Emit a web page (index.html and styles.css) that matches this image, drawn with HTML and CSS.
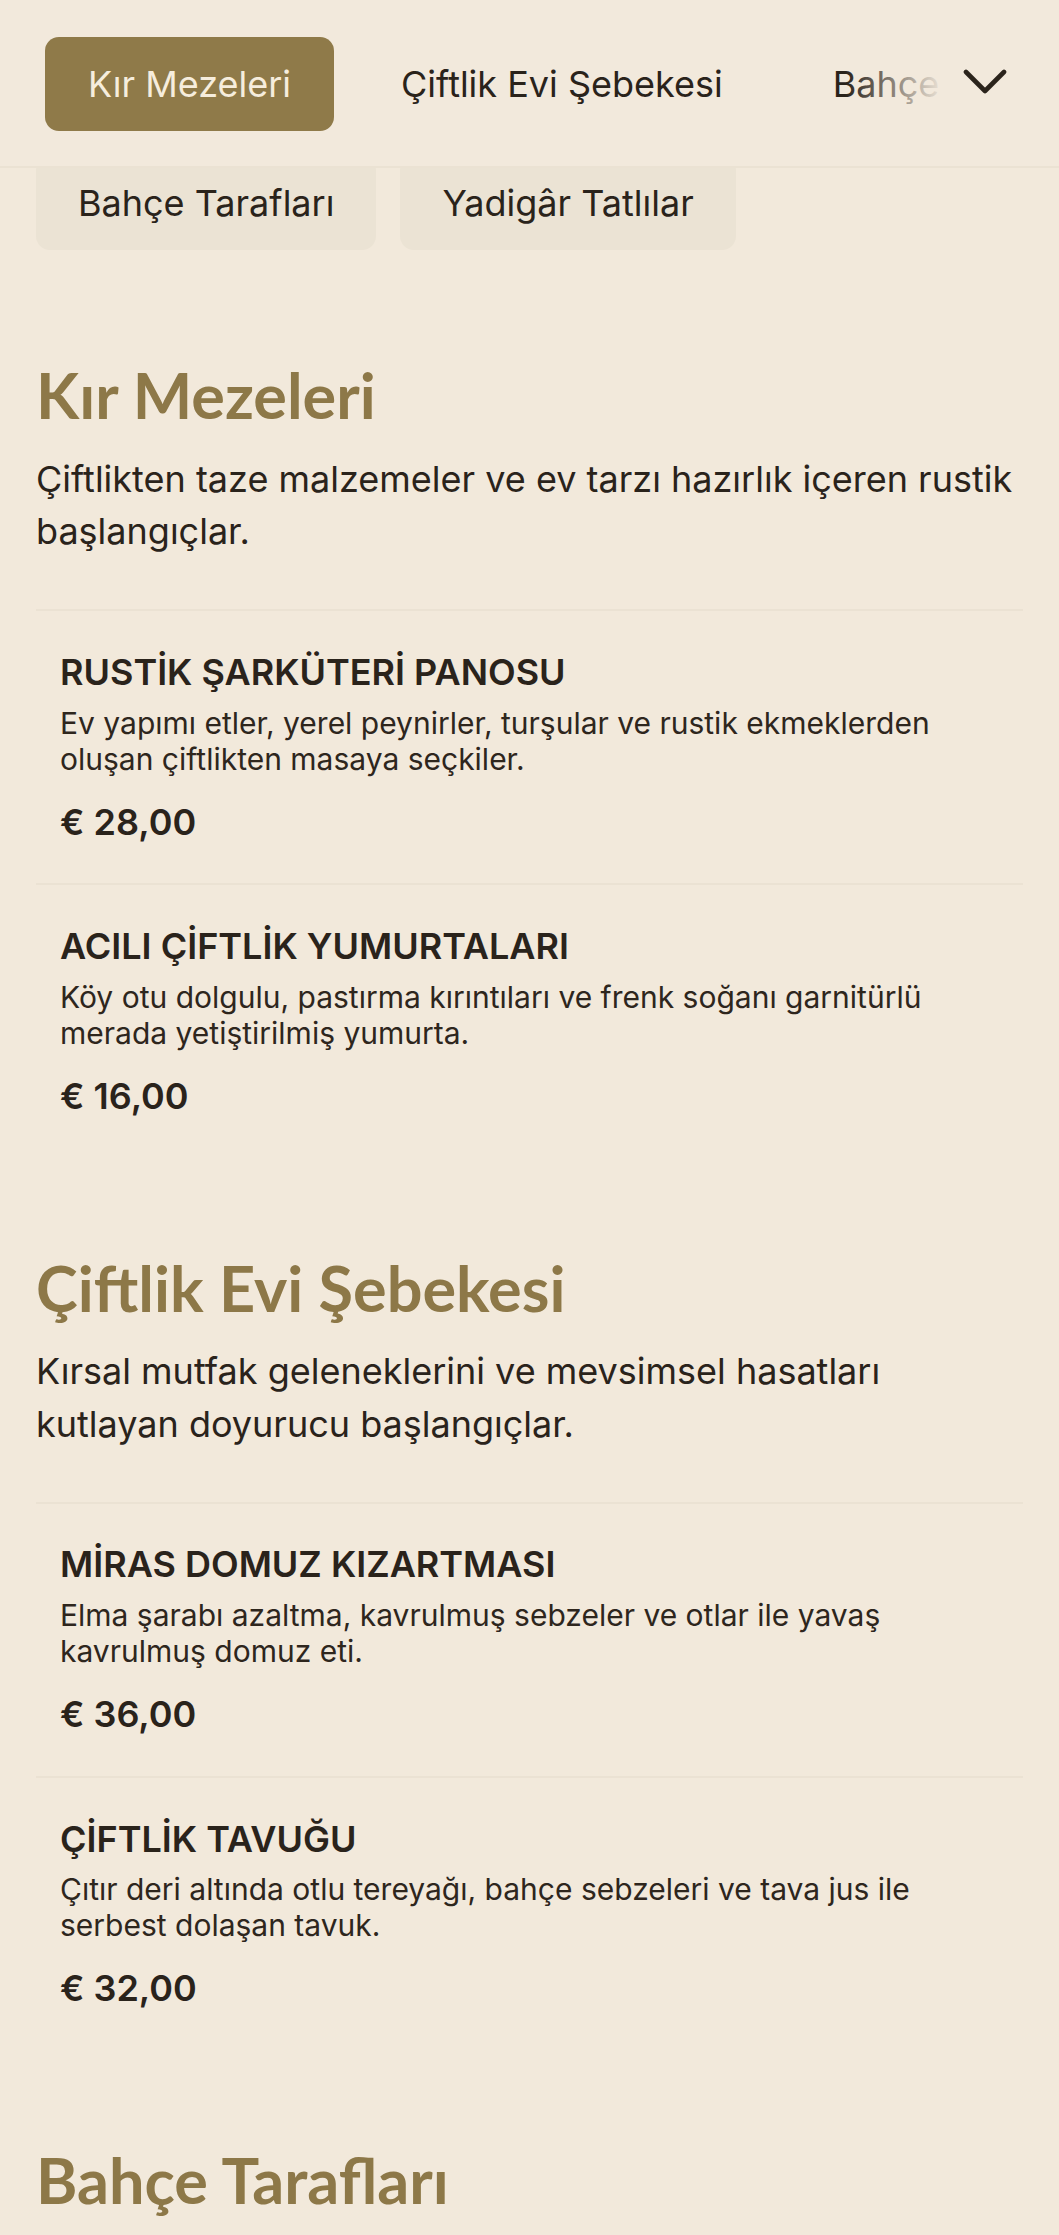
FILE: index.html
```html
<!DOCTYPE html>
<html lang="tr">
<head>
<meta charset="utf-8">
<title>Menü</title>
<link rel="stylesheet" href="styles.css">
</head>
<body>
<header class="topbar">
  <nav class="tabs">
    <a class="tab tab-active" href="#kir">Kır Mezeleri</a>
    <a class="tab" href="#ciftlik">Çiftlik Evi Şebekesi</a>
    <a class="tab" href="#bahce">Bahçe Tarafları</a>
    <a class="tab" href="#yadigar">Yadigâr Tatlılar</a>
  </nav>
  <button class="more" type="button" aria-label="Tüm kategoriler">
    <svg class="chev" width="44" height="28" viewBox="0 0 44 28"><polyline points="3,4 22,23 41,4" fill="none" stroke="#2b241c" stroke-width="4.6" stroke-linecap="round" stroke-linejoin="round"/></svg>
  </button>
</header>

<main class="page">
  <div class="pills">
    <a class="pill" href="#bahce">Bahçe Tarafları</a>
    <a class="pill" href="#yadigar">Yadigâr Tatlılar</a>
  </div>

  <section class="cat" id="kir">
    <h2 class="cat-title">Kır Mezeleri</h2>
    <p class="cat-desc">Çiftlikten taze malzemeler ve ev tarzı hazırlık içeren rustik başlangıçlar.</p>
    <ul class="items">
      <li class="item">
        <h3 class="item-name">RUSTİK ŞARKÜTERİ PANOSU</h3>
        <p class="item-desc">Ev yapımı etler, yerel peynirler, turşular ve rustik ekmeklerden oluşan çiftlikten masaya seçkiler.</p>
        <div class="item-price">€ 28,00</div>
      </li>
      <li class="item">
        <h3 class="item-name">ACILI ÇİFTLİK YUMURTALARI</h3>
        <p class="item-desc">Köy otu dolgulu, pastırma kırıntıları ve frenk soğanı garnitürlü merada yetiştirilmiş yumurta.</p>
        <div class="item-price">€ 16,00</div>
      </li>
    </ul>
  </section>

  <section class="cat" id="ciftlik">
    <h2 class="cat-title">Çiftlik Evi Şebekesi</h2>
    <p class="cat-desc">Kırsal mutfak geleneklerini ve mevsimsel hasatları kutlayan doyurucu başlangıçlar.</p>
    <ul class="items">
      <li class="item">
        <h3 class="item-name">MİRAS DOMUZ KIZARTMASI</h3>
        <p class="item-desc">Elma şarabı azaltma, kavrulmuş sebzeler ve otlar ile yavaş kavrulmuş domuz eti.</p>
        <div class="item-price">€ 36,00</div>
      </li>
      <li class="item">
        <h3 class="item-name">ÇİFTLİK TAVUĞU</h3>
        <p class="item-desc">Çıtır deri altında otlu tereyağı, bahçe sebzeleri ve tava jus ile serbest dolaşan tavuk.</p>
        <div class="item-price">€ 32,00</div>
      </li>
    </ul>
  </section>

  <section class="cat" id="bahce">
    <h2 class="cat-title">Bahçe Tarafları</h2>
    <p class="cat-desc">Bahçeden toplanan mevsim sebzeleriyle hazırlanan yan lezzetler.</p>
    <ul class="items">
      <li class="item">
        <h3 class="item-name">KÖZLENMİŞ KÖK SEBZELER</h3>
        <p class="item-desc">Bal ve kekik ile fırınlanmış havuç, pancar ve yaban havucu.</p>
        <div class="item-price">€ 12,00</div>
      </li>
    </ul>
  </section>
</main>
</body>
</html>
```

FILE: styles.css
```css
* { box-sizing: border-box; }

html, body {
  margin: 0;
  padding: 0;
  background: #f2e9db;
}

body {
  font-family: "Inter", "Liberation Sans", sans-serif;
  color: #2a231b;
}

a { color: inherit; text-decoration: none; }

/* ---------- top bar ---------- */
.topbar {
  position: fixed;
  top: 0;
  left: 0;
  right: 0;
  z-index: 10;
  height: 168px;
  padding: 37px 0 0 45px;
  background: #f2e9dc;
  border-bottom: 2px solid #ebe2d3;
  overflow: hidden;
}

.tabs {
  display: flex;
  gap: 24px;
  white-space: nowrap;
}

.tab {
  flex: none;
  display: block;
  padding: 20px 43px;
  font-size: 36px;
  line-height: 54px;
  border-radius: 14px;
  color: #2a231b;
}

.tab-active {
  background: #8f7a49;
  color: #f6eddd;
}

.more {
  position: absolute;
  top: 0;
  right: 0;
  bottom: 0;
  width: 214px;
  border: 0;
  padding: 0 52px 0 0;
  display: flex;
  align-items: center;
  justify-content: flex-end;
  background: linear-gradient(to right, rgba(242, 233, 220, 0) 0, #f2e9dc 100px);
  cursor: pointer;
}

.chev {
  display: block;
  margin-top: -2px;
}

/* ---------- page ---------- */
.page {
  padding: 156px 36px 80px;
}

.pills {
  display: flex;
  gap: 24px;
  margin-bottom: 15px;
}

.pill {
  display: block;
  padding: 20px 42px;
  font-size: 36px;
  line-height: 54px;
  background: #ebe3d4;
  border-radius: 14px;
}

.cat {
  padding-top: 92px;
}

.cat-title {
  margin: 0;
  font-family: "Lato", "Liberation Sans", sans-serif;
  font-weight: 700;
  font-size: 63px;
  line-height: 1.22;
  color: #8d7848;
}

.cat-desc {
  margin: 19px 0 0;
  font-size: 36px;
  line-height: 52.5px;
  color: #2a231b;
}

.items {
  list-style: none;
  margin: 51.5px 0 0;
  padding: 0;
}

.item {
  padding: 37.5px 24px 38px;
  border-top: 2px solid #ebe2d3;
}

.item-name {
  margin: 0;
  font-size: 36px;
  font-weight: 600;
  line-height: 1.3;
  color: #2a231b;
}

.item-desc {
  margin: 9px 0 0;
  font-size: 30px;
  line-height: 36px;
  color: #2e261d;
}

.item-price {
  margin-top: 22px;
  font-size: 36px;
  font-weight: 600;
  line-height: 1.3;
  color: #2a231b;
}
```
